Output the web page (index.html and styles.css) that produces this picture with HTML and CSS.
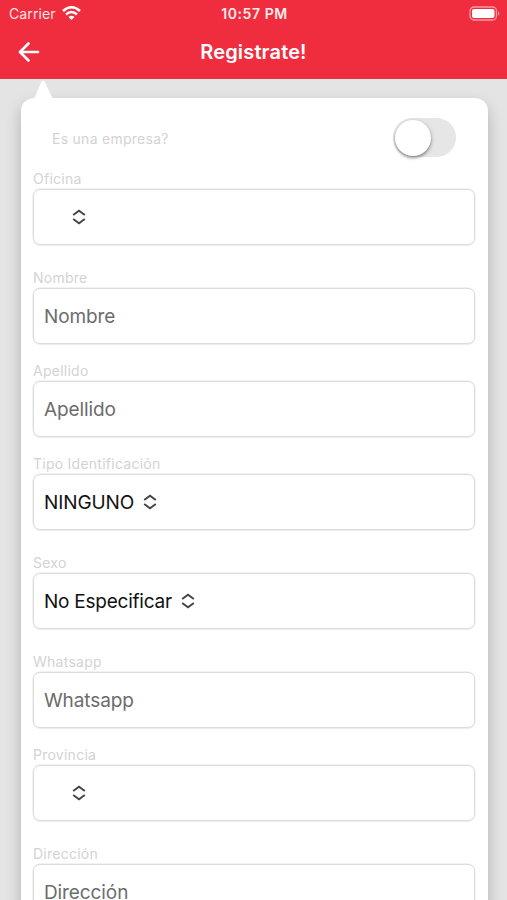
FILE: index.html
```html
<!DOCTYPE html>
<html lang="es">
<head>
<meta charset="utf-8">
<title>Registrate!</title>
<link rel="stylesheet" href="styles.css">
</head>
<body>
<svg width="0" height="0" class="defs"><symbol id="sort" viewBox="0 0 14 16"><path d="M1.2 6 7 1.7 12.8 6M1.200 10 7 14.300 12.800 10" fill="none" stroke="currentColor" stroke-width="1.900"/></symbol></svg>
<div class="screen">
  <header class="header">
    <div class="status">
      <div class="carrier"><span>Carrier</span>
        <svg width="19" height="14" viewBox="0 0 19 14"><g fill="none" stroke="#fff" stroke-width="2.500"><path d="M1 5Q9.500-2.400 18 5"/><path d="M4 8.500Q9.500 3.500 15 8.500"/></g><path d="M6.500 11Q9.500 8.400 12.500 11L9.500 14Z" fill="#fff"/></svg>
      </div>
      <span class="time">10:57 PM</span>
      <svg class="battery" width="31" height="15" viewBox="0 0 31 15"><rect x="1" y="1" width="26.500" height="13" rx="4" fill="none" stroke="#f99aa2" stroke-width="1.300"/><rect x="3" y="3" width="22.500" height="9" rx="2" fill="#fff"/><path d="M29 5.200q2.500 2.300 0 4.600z" fill="#f99aa2"/></svg>
    </div>
    <div class="nav">
      <svg class="back" width="22" height="20" viewBox="0 0 22 20"><path d="M20 10H2M10.500 1.500 2 10l8.500 8.500" fill="none" stroke="#fff" stroke-width="2.600" stroke-linecap="round" stroke-linejoin="round"/></svg>
      <h1>Registrate!</h1>
    </div>
  </header>
  <main class="card">
    <svg class="pointer" width="20" height="20" viewBox="0 0 20 20"><path d="M0 20Q2 18 3 15.500L8.300 3Q10 0 11.700 3L20 20Z" fill="#fff"/></svg>
    <div class="company"><span>Es una empresa?</span><div class="toggle"><div class="knob"></div></div></div>
    <div class="field select"><label>Oficina</label><div class="box"><span class="empty"></span><svg class="sort"><use href="#sort"/></svg></div></div>
    <div class="field"><label>Nombre</label><div class="box placeholder">Nombre</div></div>
    <div class="field"><label>Apellido</label><div class="box placeholder">Apellido</div></div>
    <div class="field select"><label>Tipo Identificación</label><div class="box"><span>NINGUNO</span><svg class="sort"><use href="#sort"/></svg></div></div>
    <div class="field select"><label>Sexo</label><div class="box"><span class="tight">No Especificar</span><svg class="sort"><use href="#sort"/></svg></div></div>
    <div class="field"><label>Whatsapp</label><div class="box placeholder">Whatsapp</div></div>
    <div class="field select"><label>Provincia</label><div class="box"><span class="empty"></span><svg class="sort"><use href="#sort"/></svg></div></div>
    <div class="field"><label>Dirección</label><div class="box placeholder">Dirección</div></div>
  </main>
</div>
</body>
</html>
```
FILE: styles.css
```css
* { box-sizing: border-box; }
body { margin: 0; overflow: hidden; font-family: Inter, "Liberation Sans", sans-serif; }
.defs { position: absolute; }
.screen { width: 507px; height: 900px; overflow: hidden; background: #e4e4e4; }
.header { height: 79px; background: #f02d3e; color: #fff; border-bottom: 1px solid #dc3544; }
.status { height: 27px; display: grid; grid-template-columns: 1fr auto 1fr; align-items: center; padding: 0 7px 0 9px; font-size: 14px; }
.carrier { display: flex; align-items: center; gap: 6px; color: #ffe4e6; letter-spacing: .1px; }
.carrier svg { margin-top: -2px; }
.time { font-weight: 600; font-size: 14px; letter-spacing: .55px; color: #ffeaec; }
.battery { justify-self: end; }
.nav { height: 50px; display: grid; grid-template-columns: 1fr auto 1fr; align-items: center; padding: 0 18px; }
h1 { margin: 0; font-size: 20px; font-weight: 600; line-height: 24px; letter-spacing: .15px; }
.card { position: relative; width: 467px; height: 840px; margin: 19px 0 0 20.5px; padding: 20px 12.5px 0; background: #fff; border-radius: 13px; box-shadow: 0 7px 15px rgba(0,0,0,.22); }
.pointer { position: absolute; left: 12px; top: -19px; }
.company { height: 53px; padding: 0 19px; display: flex; justify-content: space-between; align-items: flex-start; color: #d3d3d3; font-size: 14px; letter-spacing: .27px; }
.company span { line-height: 41px; }
.toggle { width: 63px; height: 39px; border-radius: 20px; background: #e6e6e6; padding: 1.5px; }
.knob { width: 36px; height: 36px; border-radius: 50%; background: #fff; box-shadow: 0 2px 3px rgba(0,0,0,.35), 1px 1px 5px rgba(0,0,0,.12); }
.field { height: 93px; }
.field.select { height: 99px; }
label { display: block; height: 18px; line-height: 15px; font-size: 14px; letter-spacing: .25px; color: #d3d3d3; }
.box { height: 56px; border: 1.5px solid #dcdcdc; border-radius: 7px; padding: 0 10px; display: flex; align-items: center; font-size: 19px; letter-spacing: -.1px; color: #111; box-shadow: 0 0 0 .5px #e6e6e6, 0 1px 1px rgba(0,0,0,.05); }
.placeholder { color: #6c6c6c; padding-top: 1px; }
.tight { letter-spacing: -.24px; }
.empty { width: 19px; }
.sort { width: 14px; height: 16px; margin-left: 9px; color: #444; }
```
